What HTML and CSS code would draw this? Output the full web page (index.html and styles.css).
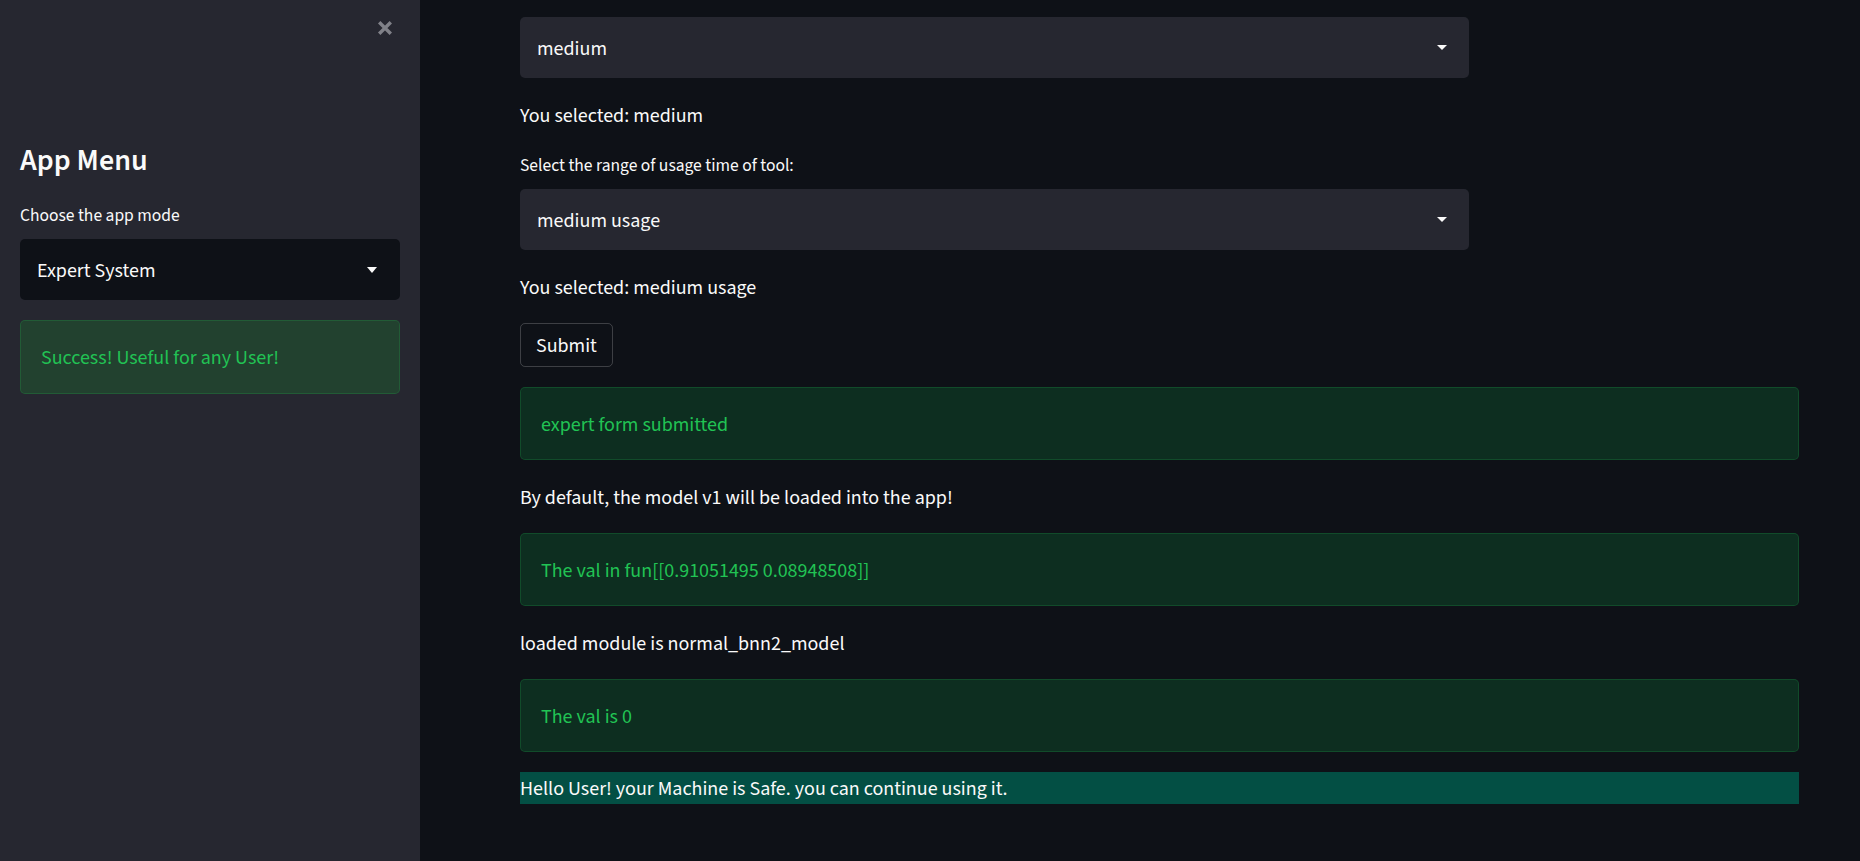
FILE: index.html
```html
<!DOCTYPE html>
<html>
<head>
<meta charset="utf-8">
<title>Expert System</title>
<link rel="stylesheet" href="styles.css">
</head>
<body>
<div class="app">
  <aside class="sidebar">
    <div class="close-row">
      <svg class="close-icon" width="16" height="16" viewBox="0 0 16 16"><path d="M2.2 2.2 L13.8 13.8 M13.8 2.2 L2.2 13.8" stroke="#808188" stroke-width="3.4" fill="none"/></svg>
    </div>
    <h1 class="sb-title">App Menu</h1>
    <div class="sb-label">Choose the app mode</div>
    <div class="sb-select">
      <span>Expert System</span>
      <svg class="caret" width="10" height="6" viewBox="0 0 10 6"><path d="M0 0 H10 L5 6 Z" fill="#fafafa"/></svg>
    </div>
    <div class="sb-alert">Success! Useful for any User!</div>
  </aside>
  <main class="main">
    <div class="content">
      <div class="select">
        <span>medium</span>
        <svg class="caret" width="10" height="5" viewBox="0 0 10 5"><path d="M0 0 H10 L5 5 Z" fill="#fafafa"/></svg>
      </div>
      <p class="text">You selected: medium</p>
      <div class="field">
        <label class="label">Select the range of usage time of tool:</label>
        <div class="select">
          <span>medium usage</span>
          <svg class="caret" width="10" height="5" viewBox="0 0 10 5"><path d="M0 0 H10 L5 5 Z" fill="#fafafa"/></svg>
        </div>
      </div>
      <p class="text">You selected: medium usage</p>
      <button class="button">Submit</button>
      <div class="alert">expert form submitted</div>
      <p class="text">By default, the model v1 will be loaded into the app!</p>
      <div class="alert">The val in fun[[0.91051495 0.08948508]]</div>
      <p class="text">loaded module is normal_bnn2_model</p>
      <div class="alert">The val is 0</div>
      <p class="text safe">Hello User! your Machine is Safe. you can continue using it.</p>
    </div>
  </main>
</div>
</body>
</html>
```
FILE: styles.css
```css
html, body {
  margin: 0;
  padding: 0;
}

body {
  background: #0e1117;
  color: #fafafa;
  font-family: "Source Sans 3", "Lato", sans-serif;
}

.app {
  display: flex;
  height: 861px;
  overflow: hidden;
}

/* ---------- sidebar ---------- */
.sidebar {
  width: 420px;
  flex: none;
  box-sizing: border-box;
  background: #262730;
  padding: 20px 20px 0;
  display: flex;
  flex-direction: column;
}

.close-row {
  display: flex;
  justify-content: flex-end;
  padding-right: 7px;
  height: 16px;
}

.close-icon {
  display: block;
}

.sb-title {
  margin: 107px 0 0;
  font-size: 30px;
  font-weight: 600;
  line-height: 36px;
}

.sb-label {
  margin-top: 24px;
  font-size: 17.5px;
  line-height: 25px;
}

.sb-select {
  margin-top: 11px;
  height: 61px;
  box-sizing: border-box;
  background: #0e1117;
  border-radius: 5px;
  display: flex;
  align-items: center;
  justify-content: space-between;
  padding: 3px 23px 0 17px;
  font-size: 20px;
}

.sb-alert {
  margin-top: 20px;
  border: 1px solid rgba(33, 195, 84, 0.2);
  background: #22412f;
  border-radius: 5px;
  padding: 21px 20px 19px;
  font-size: 20px;
  line-height: 32px;
  color: #21c354;
}

.caret {
  display: block;
  flex: none;
  margin-top: -3px;
}

/* ---------- main ---------- */
.main {
  flex: 1;
  padding: 17px 0 0 100px;
}

.content {
  width: 1279px;
  display: flex;
  flex-direction: column;
  gap: 20px;
  font-size: 20px;
}

.select {
  width: 949px;
  height: 61px;
  box-sizing: border-box;
  background: #262730;
  border-radius: 5px;
  display: flex;
  align-items: center;
  justify-content: space-between;
  padding: 3px 22px 0 17px;
}

.text {
  margin: 0;
  padding-top: 3px;
  line-height: 30px;
}

.field {
  display: flex;
  flex-direction: column;
  gap: 10px;
}

.label {
  padding-top: 2px;
  font-size: 17.5px;
  line-height: 26px;
}

.button {
  align-self: flex-start;
  height: 44px;
  box-sizing: border-box;
  border: 1px solid rgba(250, 250, 250, 0.2);
  border-radius: 5px;
  padding: 2px 15px 0;
  background: transparent;
  color: #fafafa;
  font: inherit;
  display: flex;
  align-items: center;
}

.alert {
  border: 1px solid rgba(33, 195, 84, 0.2);
  background: #0d2e20;
  border-radius: 5px;
  padding: 21px 20px 17px;
  line-height: 33px;
  color: #21c354;
}

.safe {
  background: #034f44;
  padding-top: 2px;
  line-height: 30px;
}
```
